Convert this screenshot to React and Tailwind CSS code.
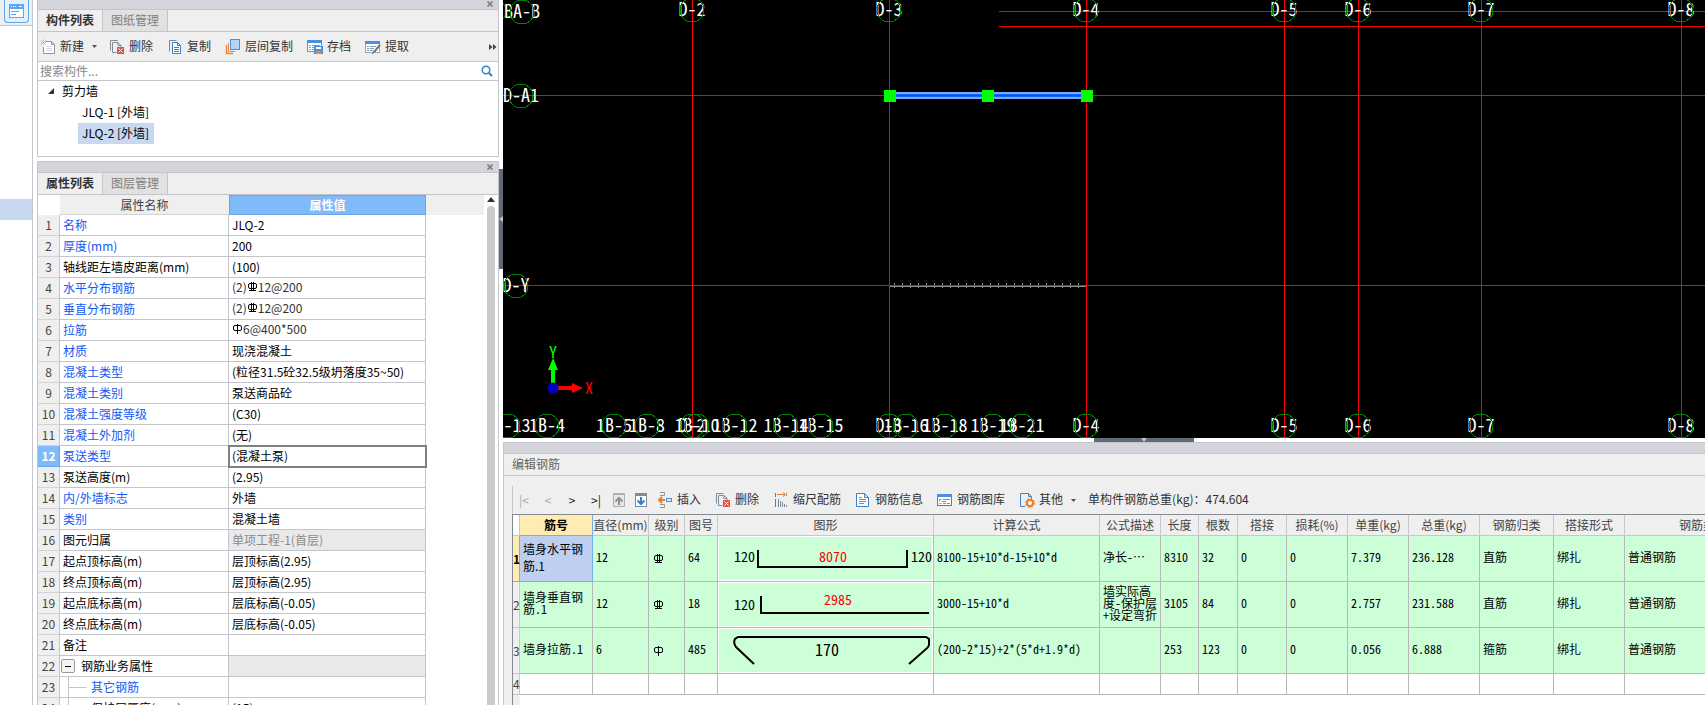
import React from 'react'
import clsx from 'clsx'

const FONT = "font-['Noto_Sans_CJK_SC',sans-serif]"
// half-width Latin glyphs, so digits take exactly half of a Chinese character
const HALF = "[font-feature-settings:'hwid']"

/* ---------- icons ---------- */

const Icon = ({ children }) => (
  <svg width="16" height="16" viewBox="0 0 16 16" fill="none" className="shrink-0" aria-hidden="true">
    {children}
  </svg>
)

const NewIcon = () => (
  <Icon>
    <path d="M6 2.5h5.5l3 3v9h-11V8" stroke="#8a97a3" fill="#fff" />
    <path d="M11.5 2.5v3h3" stroke="#8a97a3" />
    <path d="M6 7.5h6M6 9.5h6M6 11.5h6" stroke="#d5d9dc" />
    <path d="M1 1l5 5M6 1L1 6M3.500 0.500v6M1 3.500h5" stroke="#f0a43c" strokeDasharray="1 1" />
  </Icon>
)

const DeleteIcon = () => (
  <Icon>
    <path d="M1.500 11.500v-10h7M4 3.500h5l3 3v2M3.500 3.500v10h4M9 3.500v3h3" stroke="#7f8d99" />
    <rect x="8" y="8" width="7" height="7" fill="#d9534f" />
    <path d="M9.500 9.500l4 4M13.500 9.500l-4 4" stroke="#fff" />
  </Icon>
)

const CopyIcon = () => (
  <Icon>
    <path d="M2.500 12.500v-11h7" stroke="#7f8d99" />
    <path d="M5.500 3.500h5l3 3v8h-8zM10.500 3.500v3h3" stroke="#3b82d0" fill="#fff" />
    <path d="M7 8.500h5M7 10.500h5M7 12.500h5" stroke="#3b82d0" />
  </Icon>
)

const LayerIcon = () => (
  <Icon>
    <path d="M1.500 6v8.500H8" stroke="#f28534" strokeWidth="1.500" />
    <path d="M3.500 4v8.500H10" stroke="#f28534" />
    <rect x="5.500" y="0.500" width="9" height="10" fill="#b3d4fb" stroke="#4a90e2" />
  </Icon>
)

const ArchiveIcon = () => (
  <Icon>
    <rect x="0.500" y="1.500" width="14" height="11" fill="#fff" stroke="#7f8d99" />
    <rect x="0" y="1" width="15" height="3" fill="#4a90e2" />
    <path d="M2 6.500h2M5 6.500h8M2 8.500h2M5 8.500h3M2 10.500h2M5 10.500h3" stroke="#8a97a3" />
    <rect x="7" y="7" width="9" height="8" fill="#4a90e2" />
    <rect x="9" y="8" width="5" height="2" fill="#fff" />
    <rect x="9" y="12" width="5" height="3" fill="#f28534" />
  </Icon>
)

const ExtractIcon = () => (
  <Icon>
    <rect x="0.500" y="2.500" width="14" height="11" fill="#fff" stroke="#9aa6b0" />
    <rect x="0" y="2" width="15" height="3" fill="#4a90e2" />
    <path d="M2 7.500h2M5 7.500h6M2 9.500h2M5 9.500h4M2 11.500h2M5 11.500h3" stroke="#8a97a3" />
    <path d="M15 6l-6 7" stroke="#6b7680" strokeWidth="2" />
    <path d="M9 12l-1.500 3" stroke="#28a0c8" strokeWidth="1.500" />
  </Icon>
)

const UpIcon = () => (
  <Icon>
    <rect x="2.500" y="1.500" width="11" height="13" fill="#e6e6e6" stroke="#b0b0b0" />
    <rect x="2" y="1" width="12" height="2" fill="#b0b0b0" />
    <path d="M8 13V7M4.500 9.500L8 6l3.500 3.500" stroke="#8f8f8f" strokeWidth="2" />
  </Icon>
)

const DownIcon = () => (
  <Icon>
    <rect x="2.500" y="1.500" width="11" height="13" fill="#fff" stroke="#7f8d99" />
    <rect x="2" y="1" width="12" height="3" fill="#7f8d99" />
    <path d="M8 5v6M4.500 8.500L8 12l3.500-3.500" stroke="#2f7fd6" strokeWidth="2" />
  </Icon>
)

const InsertIcon = () => (
  <Icon>
    <path d="M3 0.500h4.500v3H3M3 12.500h4.500v3H3" stroke="#8a97a3" />
    <path d="M8 8H3M5 5L2 8l3 3" stroke="#f07c28" strokeWidth="2" />
    <rect x="9.500" y="6.500" width="5" height="3" fill="#dcebfb" stroke="#4a90e2" />
  </Icon>
)

const ScaleIcon = () => (
  <Icon>
    <path d="M2.500 1v4M2.500 7v8" stroke="#3b82d0" />
    <path d="M4 2.500h8M10 0.500l2.500 2-2.500 2" stroke="#f07c28" />
    <path d="M13.500 1v3" stroke="#3b82d0" strokeDasharray="1 1" />
    <path d="M5.500 7v8M7.500 9v6M9.500 10v5M11.500 12v3M13.500 13v2" stroke="#7f8d99" />
  </Icon>
)

const InfoIcon = () => (
  <Icon>
    <path d="M1.500 1.500h8l4 4v9h-12zM9.500 1.500v4h4" stroke="#3b82d0" fill="#fff" />
    <path d="M4 5.500h3M4 7.500h7M4 9.500h7M4 11.500h5" stroke="#7f8d99" />
  </Icon>
)

const LibraryIcon = () => (
  <Icon>
    <rect x="0.500" y="2.500" width="14" height="11" fill="#fff" stroke="#3b82d0" />
    <rect x="0" y="2" width="15" height="3" fill="#4a90e2" />
    <path d="M2.500 9.500v-2h2M6 7.500h7M5 9.500h4" stroke="#7f8d99" />
    <path d="M2 11.500h3" stroke="#f0c03c" />
    <path d="M6 11.500h3" stroke="#5ab45a" />
    <path d="M10 11.500h3" stroke="#e06c50" />
  </Icon>
)

const OtherIcon = () => (
  <Icon>
    <path d="M6 14.500H1.500v-13h8l3 3V7M9.500 1.500v3h3" stroke="#3b82d0" />
    <circle cx="11" cy="11" r="3" stroke="#f07c28" strokeWidth="2" fill="#fff" />
    <circle cx="11" cy="11" r="4.500" stroke="#f07c28" strokeDasharray="2 1.500" />
  </Icon>
)

const Caret = () => (
  <svg width="5" height="3" viewBox="0 0 5 3" className="-mr-0.5 ml-1 shrink-0" aria-hidden="true">
    <path d="M0 0h5L2.500 3z" fill="#555" />
  </svg>
)

// rebar grade signs: one bar for plain steel, two bars and a foot for HRB400
const Grade = ({ three }) => (
  <svg width="11" height="10" viewBox="0 0 11 10" fill="none" stroke="#000" className="block shrink-0" role="img" aria-label={three ? 'HRB400' : 'HPB300'}>
    <rect x="1.500" y="1.500" width="8" height="5" rx="1.500" />
    {three ? <path d="M4.500 0v9M6.500 0v9M2 8.500h7" /> : <path d="M5.500 0v10" />}
  </svg>
)

const BarSpec = ({ children }) => <span className="flex items-center pb-0.5">{children}</span>

/* ---------- shared pieces ---------- */

const ToolButton = ({ icon: I, children, caret }) => (
  <button type="button" className="flex items-center gap-1 whitespace-nowrap">
    <I />
    <span className="pb-0.5 leading-4">{children}</span>
    {caret && <Caret />}
  </button>
)

const PanelHead = ({ tabs }) => (
  <>
    <div className="flex h-2.5 shrink-0 items-center justify-end bg-[#d3d5db] pr-[5px]">
      <button type="button" aria-label="关闭" className="flex">
        <svg width="6" height="6" viewBox="0 0 6 6" stroke="#777" strokeWidth="1.500" aria-hidden="true">
          <path d="M0.500 0.500l5 5M5.500 0.500l-5 5" />
        </svg>
      </button>
    </div>
    <div className="flex h-[23px] shrink-0 border-y border-[#c3c5ca] bg-[#efefef]" role="tablist">
      {tabs.map((t, i) => (
        <button
          key={t}
          type="button"
          role="tab"
          aria-selected={i === 0}
          className={clsx(
            'w-[65px] border-r border-[#c3c5ca] pb-0.5 text-xs leading-[18px]',
            i === 0 ? 'font-bold text-[#333]' : 'bg-[#e1e1e1] text-[#808080]'
          )}
        >
          {t}
        </button>
      ))}
    </div>
  </>
)

/* ---------- left side ---------- */

const Rail = () => (
  <div className="flex w-[33px] shrink-0 flex-col border-r border-[#c3c5ca]">
    <div className="flex h-[26px] items-start border-b border-[#c3c5ca] bg-[#efefef] pl-1">
      <button type="button" aria-label="构件" className="flex h-[23px] w-[25px] items-center justify-center rounded-b border border-t-0 border-[#5ba7f0] bg-[#e3f0fd]">
        <svg width="15" height="14" viewBox="0 0 15 14" fill="none" aria-hidden="true">
          <rect x="0.500" y="0.500" width="14" height="13" fill="#fff" stroke="#5ba7f0" />
          <rect x="0" y="0" width="15" height="5" fill="#5ba7f0" />
          <path d="M2 2.500h1M4 2.500h1M6 2.500h1M10 2.500h3" stroke="#fff" />
          <path d="M2 7.500h8M2 10.500h5" stroke="#5ba7f0" />
        </svg>
      </button>
    </div>
    <div className="mt-[173px] h-[21px] bg-[#c8d8f0]" />
  </div>
)

const ComponentList = () => (
  <section className="flex shrink-0 flex-col border border-t-0 border-[#c3c5ca]">
    <div className="-mt-px flex flex-col">
      <PanelHead tabs={['构件列表', '图纸管理']} />
    </div>
    <div className="flex h-[30px] items-center gap-3.5 border-b border-[#c3c5ca] bg-[#efefef] pl-0.5 text-xs text-[#333]">
      <ToolButton icon={NewIcon} caret>新建</ToolButton>
      <ToolButton icon={DeleteIcon}>删除</ToolButton>
      <ToolButton icon={CopyIcon}>复制</ToolButton>
      <ToolButton icon={LayerIcon}>层间复制</ToolButton>
      <ToolButton icon={ArchiveIcon}>存档</ToolButton>
      <ToolButton icon={ExtractIcon}>提取</ToolButton>
      <button type="button" aria-label="更多" className="ml-auto pr-px">
        <svg width="8" height="6" viewBox="0 0 8 6" fill="#444" aria-hidden="true">
          <path d="M0 0l3.500 3L0 6zM4 0l3.500 3L4 6z" />
        </svg>
      </button>
    </div>
    <label className="flex h-[19px] items-center border-b border-[#c3c5ca] pr-[5px] pl-0.5">
      <input type="text" placeholder="搜索构件..." aria-label="搜索构件" className="min-w-0 flex-1 text-xs leading-4 outline-none placeholder:text-[#888]" />
      <svg width="12" height="12" viewBox="0 0 12 12" fill="none" stroke="#2b86c8" strokeWidth="1.500" aria-hidden="true">
        <circle cx="5" cy="5" r="3.750" />
        <path d="M8 8l3 3" strokeWidth="2" />
      </svg>
    </label>
    <ul className="h-[75px] text-xs text-black">
      <li>
        <div className="flex items-center gap-2 pb-0.5 pl-2.5 leading-[19px]">
          <svg width="6" height="6" viewBox="0 0 6 6" aria-hidden="true">
            <path d="M6 0v6H0z" fill="#333" />
          </svg>
          剪力墙
        </div>
        <ul className="pl-10 leading-[19px]">
          <li><span className="block w-[76px] px-1 pb-0.5">JLQ-1 [外墙]</span></li>
          <li><span className="block w-[76px] bg-[#c8d8f0] px-1 pb-0.5">JLQ-2 [外墙]</span></li>
        </ul>
      </li>
    </ul>
  </section>
)

// third item: 'b' blue public property, 'g' group row, 'c' child row
const props = [
  ['名称', 'JLQ-2', 'b'],
  ['厚度(mm)', '200', 'b'],
  ['轴线距左墙皮距离(mm)', '(100)'],
  ['水平分布钢筋', <BarSpec>(2)<Grade three />12@200</BarSpec>, 'b'],
  ['垂直分布钢筋', <BarSpec>(2)<Grade three />12@200</BarSpec>, 'b'],
  ['拉筋', <BarSpec><Grade />6@400*500</BarSpec>, 'b'],
  ['材质', '现浇混凝土', 'b'],
  ['混凝土类型', '(粒径31.5砼32.5级坍落度35~50)', 'b'],
  ['混凝土类别', '泵送商品砼', 'b'],
  ['混凝土强度等级', '(C30)', 'b'],
  ['混凝土外加剂', '(无)', 'b'],
  ['泵送类型', '(混凝土泵)', 'b'],
  ['泵送高度(m)', '(2.95)'],
  ['内/外墙标志', '外墙', 'b'],
  ['类别', '混凝土墙', 'b'],
  ['图元归属', '单项工程-1(首层)'],
  ['起点顶标高(m)', '层顶标高(2.95)'],
  ['终点顶标高(m)', '层顶标高(2.95)'],
  ['起点底标高(m)', '层底标高(-0.05)'],
  ['终点底标高(m)', '层底标高(-0.05)'],
  ['备注', ''],
  ['钢筋业务属性', '', 'g'],
  ['其它钢筋', '', 'bc'],
  ['保护层厚度(mm)', '(15)', 'c'],
]

const PropName = ({ name, k = '' }) => {
  if (k === 'g') {
    return (
      <div className="flex items-center gap-1.5">
        <button type="button" aria-label="折叠" className="flex h-3.5 w-3.5 items-center justify-center rounded-xs border border-[#9a9a9a] bg-[#f4f4f4]">
          <span className="h-px w-1.5 bg-black" />
        </button>
        {name}
      </div>
    )
  }
  if (k.includes('c')) {
    return (
      <div className="flex items-center gap-1 pl-[7px]">
        <svg width="19" height="20" viewBox="0 0 19 20" stroke="#c3c5ca" aria-hidden="true">
          <path d={k === 'bc' ? 'M0.500 0v20M0.500 10.500h18' : 'M0.500 0v20'} />
        </svg>
        {name}
      </div>
    )
  }
  return <div className="pl-0.5">{name}</div>
}

const PropertyList = () => (
  <section className="flex min-h-0 flex-1 flex-col border border-b-0 border-[#c3c5ca]">
    <PanelHead tabs={['属性列表', '图层管理']} />
    <div className="flex min-h-0 flex-1">
      <div className="min-w-0 flex-1 overflow-hidden">
        <table className="w-full table-fixed border-separate border-spacing-0 text-xs leading-5">
          <colgroup>
            <col className="w-[22px]" />
            <col className="w-[169px]" />
            <col className="w-[197px]" />
            <col />
          </colgroup>
          <thead>
            <tr className="text-[#444]">
              <th className="h-5 p-0" />
              <th className="border-b border-[#d4d4d4] bg-[#efefef] p-0 leading-[18px] font-normal">属性名称</th>
              <th className="border border-[#66a6ea] bg-[#80baf8] p-0 leading-[18px] font-bold text-white">属性值</th>
              <th className="bg-[#efefef] p-0" />
            </tr>
          </thead>
          <tbody>
            {props.map(([name, value, k = ''], i) => {
              const current = i === 11
              return (
                <tr key={name}>
                  <td className={clsx('h-[21px] border-r border-b p-0 text-center', current ? 'border-[#66a6ea] bg-[#80baf8] font-bold text-white' : 'border-[#d4d4d4] border-r-[#c3c5ca] bg-[#efefef] text-[#444]')}>
                    {i + 1}
                  </td>
                  <td className={clsx('border-r border-b border-[#c3c5ca] p-0 pl-px whitespace-nowrap', k.includes('b') ? 'text-[#1458f5]' : 'text-black')}>
                    <PropName name={name} k={k} />
                  </td>
                  <td
                    className={clsx(
                      'border-r border-b border-[#c3c5ca] p-0 pl-[3px] whitespace-nowrap',
                      current && 'outline-2 -outline-offset-1 outline-[#808080]',
                      (i === 15 || i === 21) && 'bg-[#e9e9e9]',
                      i === 15 ? 'text-[#8c8c8c]' : i > 2 && i < 6 ? 'leading-[18px] text-[#333]' : 'text-black'
                    )}
                  >
                    {value}
                  </td>
                  <td className="p-0" />
                </tr>
              )
            })}
          </tbody>
        </table>
      </div>
      {/* scroll bar */}
      <div className="flex w-3.5 shrink-0 flex-col items-center gap-1 pt-0.5">
        <svg width="8" height="5" viewBox="0 0 8 5" aria-hidden="true">
          <path d="M4 0l4 5H0z" fill="#333" />
        </svg>
        <div className="w-2 flex-1 rounded-t bg-[#cbcbcb]" />
      </div>
    </div>
  </section>
)

/* ---------- drawing area ---------- */

const columns = [
  [189, 'D-2'],
  [386, 'D-3'],
  [583, 'D-4'],
  [781, 'D-5'],
  [855, 'D-6'],
  [978, 'D-7'],
  [1178, 'D-8'],
]

const bottomAxes = [
  [5, '1B-13'],
  [44, '1B-4'],
  [111, '1B-5'],
  [144, '1B-8'],
  [194, '1B-10'],
  [232, '1B-12'],
  [283, '1B-14'],
  [318, '1B-15'],
  [403, '1B-16'],
  [442, '1B-18'],
  [490, '1B-19'],
  [519, '1B-21'],
]

const Axis = ({ x, y, children }) => (
  <g>
    <text x={x} y={y + 6} textAnchor="middle" fill="#fff" fontSize="18">{children}</text>
    <circle cx={x} cy={y} r="12" fill="none" stroke="#008000" shapeRendering="crispEdges" />
  </g>
)

const ticks = Array.from({ length: 24 }, (_, i) => 391.5 + i * 8)

const Canvas = () => (
  <div className="min-h-0 flex-1 bg-black">
    <svg width="100%" height="100%" className={clsx('block', HALF)} role="img" aria-label="轴网平面图">
      <g stroke="#f00" shapeRendering="crispEdges">
        <path d="M386.500 286.500h197" stroke="#909090" />
        {ticks.map((x) => <path key={x} d={`M${x} 283v5`} stroke="#909090" />)}
        <line x1="496" y1="11.500" x2="100%" y2="11.500" />
        <line x1="496" y1="26.500" x2="100%" y2="26.500" />
        <line x1="0" y1="285.500" x2="100%" y2="285.500" />
        {columns.map(([x, n]) => <line key={n} x1={x + 0.5} y1="0" x2={x + 0.5} y2="437" />)}
        <rect x="387" y="92" width="197" height="7" fill="#78aaff" stroke="none" />
        <rect x="387" y="94" width="197" height="3" fill="#1464ff" stroke="none" />
        <line x1="0" y1="95.500" x2="100%" y2="95.500" />
      </g>
      <circle cx="-9" cy="11" r="12" fill="none" stroke="#008000" />
      <Axis x={19} y={12}>BA-B</Axis>
      <Axis x={18} y={96}>D-A1</Axis>
      <Axis x={13} y={286}>D-Y</Axis>
      {columns.map(([x, n]) => <Axis key={n} x={x} y={10}>{n}</Axis>)}
      {columns.map(([x, n]) => <Axis key={n} x={x} y={426}>{n}</Axis>)}
      {bottomAxes.map(([x, n]) => <Axis key={n} x={x} y={426}>{n}</Axis>)}
      <g fill="#0f0">
        <rect x="381" y="90" width="12" height="12" />
        <rect x="479" y="90" width="12" height="12" />
        <rect x="578" y="90" width="12" height="12" />
      </g>
      {/* coordinate arrows */}
      <rect x="48" y="369" width="4" height="16" fill="#0f0" />
      <path d="M50 358l5 12H45z" fill="#0f0" />
      <rect x="54" y="386" width="15" height="4" fill="#f00" />
      <path d="M80 388l-11-5v10z" fill="#f00" />
      <circle cx="50" cy="388" r="5.500" fill="#0000c0" />
      <text x="50" y="358" textAnchor="middle" fontSize="16" fill="#0f0">Y</text>
      <text x="86" y="394" textAnchor="middle" fontSize="16" fill="#f00">X</text>
    </svg>
  </div>
)

/* ---------- rebar editor ---------- */

const Shape = ({ children }) => (
  <svg width="215" height="45" viewBox="1 1 213 43" fill="none" stroke="#000" strokeWidth="2" className="block border border-white" role="img" aria-label="钢筋图形">
    {children}
  </svg>
)

const Label = ({ x, y, size = 14, fill = '#000', children }) => (
  <text x={x} y={y} fontSize={size} fill={fill} stroke="none">{children}</text>
)

const shapes = [
  <Shape>
    <path d="M40 14v17h149V14" />
    <Label x={16} y={26}>120</Label>
    <Label x={101} y={26} fill="#f00">8070</Label>
    <Label x={193} y={26}>120</Label>
  </Shape>,
  <Shape>
    <path d="M43 14v17h168" />
    <Label x={16} y={28}>120</Label>
    <Label x={106} y={23} fill="#f00">2985</Label>
  </Shape>,
  <Shape>
    <path d="M36 36L18 19q-3-4-1-8l3-2h188l3 2v6q-1 3-3 4L191 36" />
    <Label x={97} y={28} size={16}>170</Label>
  </Shape>,
]

const heads = [
  ['筋号', 'w-[73px]'],
  ['直径(mm)', 'w-[56px]'],
  ['级别', 'w-[36px]'],
  ['图号', 'w-[33px]'],
  ['图形', 'w-[216px]'],
  ['计算公式', 'w-[166px]'],
  ['公式描述', 'w-[61px]'],
  ['长度', 'w-[38px]'],
  ['根数', 'w-[39px]'],
  ['搭接', 'w-[49px]'],
  ['损耗(%)', 'w-[61px]'],
  ['单重(kg)', 'w-[61px]'],
  ['总重(kg)', 'w-[71px]'],
  ['钢筋归类', 'w-[74px]'],
  ['搭接形式', 'w-[71px]'],
  ['钢筋类型', 'w-[157px]'],
]

const bars = [
  ['墙身水平钢\n筋.1', '12', <Grade three />, '64', shapes[0], '8100-15+10*d-15+10*d', '净长-…', '8310', '32', '0', '0', '7.379', '236.128', '直筋', '绑扎', '普通钢筋'],
  ['墙身垂直钢\n筋.1', '12', <Grade three />, '18', shapes[1], '3000-15+10*d', '墙实际高\n度-保护层\n+设定弯折', '3105', '84', '0', '0', '2.757', '231.588', '直筋', '绑扎', '普通钢筋'],
  ['墙身拉筋.1', '6', <Grade />, '485', shapes[2], '(200-2*15)+2*(5*d+1.9*d)', '', '253', '123', '0', '0', '0.056', '6.888', '箍筋', '绑扎', '普通钢筋'],
]

const NavButton = ({ label, off, children }) => (
  <button type="button" aria-label={label} disabled={off} className={clsx('w-6 pr-0.5 text-center', off ? 'text-[#aaa]' : 'text-[#222]')}>
    {children}
  </button>
)

const RebarTable = () => (
  <table className="w-[1269px] table-fixed border-separate border-spacing-0 text-xs text-black">
    <colgroup>
      <col className="w-[7px]" />
      {heads.map(([h, w]) => <col key={h} className={w} />)}
    </colgroup>
    <thead>
      <tr>
        <th className="h-[21px] border-r border-b border-[#c8c8c8] bg-white p-0" />
        {heads.map(([h], i) => (
          <th
            key={h}
            className={clsx(
              'border-r border-b p-0 leading-5 whitespace-nowrap',
              i === 0 ? 'border-[#6fb0f0] bg-[#ffecb3] font-bold' : 'border-[#c8c8c8] bg-[#efefef] font-normal text-[#444]'
            )}
          >
            {h}
          </th>
        ))}
      </tr>
    </thead>
    <tbody>
      {bars.map((row, r) => (
        <tr key={r}>
          <td className={clsx('h-[46px] border-r border-b p-0', r === 0 ? 'border-[#6fb0f0] bg-[#ffecb3] font-bold' : 'border-[#c8c8c8] bg-[#efefef] text-[#444]')}>{r + 1}</td>
          {row.map((v, c) => (
            <td
              key={c}
              className={clsx(
                'border-r border-b whitespace-pre',
                c === 4 && 'p-0',
                c === 2 && 'p-0 pl-1',
                c !== 4 && c !== 2 && 'pt-0 pr-0 pb-1 pl-[3px]',
                r === 0 && c === 0 ? 'border-[#6fb0f0] bg-[#bfcff0] leading-[17px]' : 'border-[#b8b8b8] bg-[#ccffd8] leading-3',
                (r > 0 || c > 0) && HALF
              )}
            >
              {v}
            </td>
          ))}
        </tr>
      ))}
      <tr>
        <td className="h-[21px] border-r border-b border-[#c8c8c8] bg-[#efefef] p-0 leading-5 text-[#444]">4</td>
        {heads.map(([h]) => <td key={h} className="border-r border-b border-[#b8b8b8] p-0" />)}
      </tr>
    </tbody>
  </table>
)

const RebarEditor = () => (
  <section className="shrink-0 border-l border-[#c3c5ca] bg-[#efefef]">
    <div className="h-3 border-y border-[#c3c5ca] bg-[#d3d5db]" />
    <h2 className="h-[22px] border-b border-[#c3c5ca] pl-2 text-xs leading-5 text-[#666]">编辑钢筋</h2>
    <div className="pt-2.5 pl-2">
      <div className="flex h-7 items-center border-l border-[#c3c5ca] text-xs text-[#333]">
        <NavButton label="首行" off>|&lt;</NavButton>
        <NavButton label="上一行" off>&lt;</NavButton>
        <NavButton label="下一行">&gt;</NavButton>
        <NavButton label="末行">&gt;|</NavButton>
        <div className="flex gap-1.5 pr-2 pl-0.5">
          <button type="button" aria-label="上移"><UpIcon /></button>
          <button type="button" aria-label="下移"><DownIcon /></button>
        </div>
        <div className="flex items-center gap-3.5">
          <ToolButton icon={InsertIcon}>插入</ToolButton>
          <ToolButton icon={DeleteIcon}>删除</ToolButton>
          <ToolButton icon={ScaleIcon}>缩尺配筋</ToolButton>
          <ToolButton icon={InfoIcon}>钢筋信息</ToolButton>
          <ToolButton icon={LibraryIcon}>钢筋图库</ToolButton>
          <ToolButton icon={OtherIcon} caret>其他</ToolButton>
          <span className="pb-0.5 leading-4 whitespace-nowrap">单构件钢筋总重(kg)：474.604</span>
        </div>
      </div>
      <div className="overflow-hidden border-t border-l border-[#858a90] bg-white">
        <RebarTable />
        <div className="h-2.5 w-[7px] bg-[#efefef]" />
      </div>
    </div>
  </section>
)

const App = () => (
  <div className={clsx('flex h-screen overflow-hidden bg-white', FONT)}>
    <Rail />
    <div className="flex w-[466px] shrink-0 flex-col gap-1 pl-1">
      <ComponentList />
      <PropertyList />
    </div>
    <div className="w-1 shrink-0 pt-[169px]">
      <button type="button" aria-label="收起左侧" className="flex h-[100px] w-1 items-center justify-center bg-[#5f6a76]">
        <svg width="4" height="6" viewBox="0 0 4 6" aria-hidden="true">
          <path d="M4 0v6L0 3z" fill="#c0c4c8" />
        </svg>
      </button>
    </div>
    <main className="flex min-w-0 flex-1 flex-col">
      <Canvas />
      <div className="flex shrink-0 justify-center pl-20">
        <button type="button" aria-label="收起下方" className="flex h-1 w-[100px] items-center justify-center bg-[#5f6a76]">
          <svg width="6" height="4" viewBox="0 0 6 4" aria-hidden="true">
            <path d="M0 0h6L3 4z" fill="#c0c4c8" />
          </svg>
        </button>
      </div>
      <RebarEditor />
    </main>
  </div>
)

export default App
